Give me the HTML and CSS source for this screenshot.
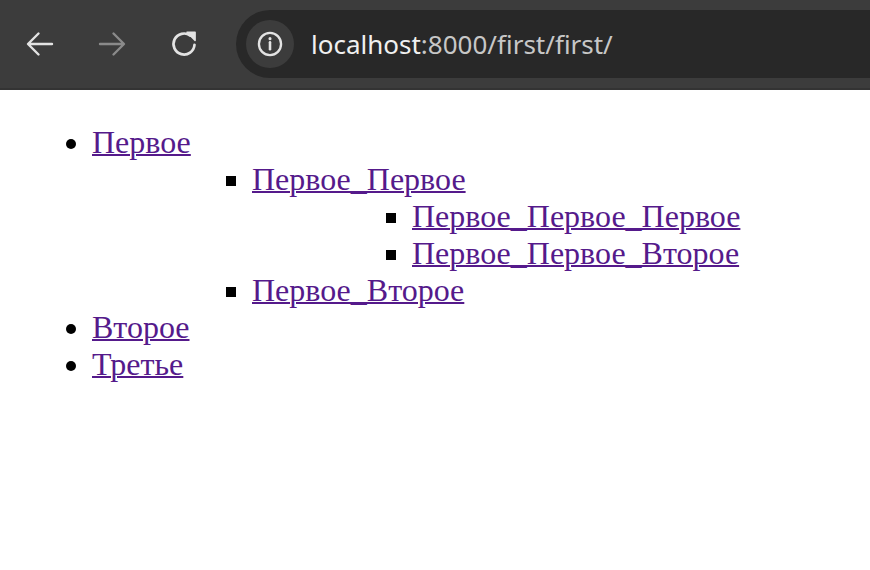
FILE: index.html
```html
<!DOCTYPE html>
<html lang="ru">
<head>
<meta charset="utf-8">
<title>first</title>
<link rel="stylesheet" href="styles.css">
</head>
<body>
<header class="toolbar">
  <span class="nav-btn">
    <svg width="36" height="36" viewBox="0 0 24 24"><path d="M20 12H4.5M11 5l-7 7 7 7" fill="none" stroke="#e3e3e3" stroke-width="1.6" stroke-linecap="round" stroke-linejoin="round"/></svg>
  </span>
  <span class="nav-btn">
    <svg width="36" height="36" viewBox="0 0 24 24"><path d="M4 12h15.5M13 5l7 7-7 7" fill="none" stroke="#8a8a8a" stroke-width="1.6" stroke-linecap="round" stroke-linejoin="round"/></svg>
  </span>
  <span class="nav-btn">
    <svg width="36" height="36" viewBox="0 0 24 24"><path d="M19 12.5A7 7 0 1 1 16.2 6.4" fill="none" stroke="#e3e3e3" stroke-width="1.8" stroke-linecap="round"/><path d="M14 4.2H19.4V9.6Z" fill="#e3e3e3" stroke="#e3e3e3" stroke-width="1" stroke-linejoin="round"/></svg>
  </span>
  <div class="omnibox">
    <span class="info">
      <svg width="28" height="28" viewBox="0 0 24 24"><circle cx="12" cy="12" r="9.5" fill="none" stroke="#e3e3e3" stroke-width="2"/><path d="M12 10.5v6" stroke="#e3e3e3" stroke-width="2.2" stroke-linecap="round"/><circle cx="12" cy="7.4" r="1.3" fill="#e3e3e3"/></svg>
    </span>
    <span class="url"><span class="host">localhost</span>:8000/first/first/</span>
  </div>
</header>
<main class="page">
  <ul class="list">
    <li><a href="#">Первое</a>
      <ul><ul>
        <li><a href="#">Первое_Первое</a>
          <ul><ul>
            <li><a href="#">Первое_Первое_Первое</a></li>
            <li><a href="#">Первое_Первое_Второе</a></li>
          </ul></ul>
        </li>
        <li><a href="#">Первое_Второе</a></li>
      </ul></ul>
    </li>
    <li><a href="#">Второе</a></li>
    <li><a href="#">Третье</a></li>
  </ul>
</main>
</body>
</html>
```

FILE: styles.css
```css
html, body {
  margin: 0;
  padding: 0;
  background: #ffffff;
}
.toolbar {
  height: 88px;
  background: #3c3c3c;
  border-bottom: 2px solid #333333;
  display: flex;
  align-items: center;
  padding-left: 12px;
  box-sizing: content-box;
}
.nav-btn {
  width: 56px;
  height: 56px;
  margin-right: 16px;
  display: flex;
  align-items: center;
  justify-content: center;
}
.nav-btn svg { display: block; }
.omnibox {
  flex: 1;
  height: 68px;
  margin-left: 8px;
  background: #282828;
  border-radius: 34px 0 0 34px;
  display: flex;
  align-items: center;
  padding-left: 10px;
}
.info {
  width: 48px;
  height: 48px;
  border-radius: 50%;
  background: #3c3c3c;
  display: flex;
  align-items: center;
  justify-content: center;
}
.info svg { display: block; }
.url {
  margin-left: 17px;
  font-family: "Noto Sans", "Open Sans", sans-serif;
  font-size: 26px;
  color: #c7c7c7;
  letter-spacing: 0;
}
.host { color: #f0f0f0; }
.page {
  font-family: "Liberation Serif", "Times New Roman", serif;
  font-size: 32px;
  color: #000;
}
.list {
  margin: 34px 0;
  padding-left: 92px;
}
.list ul {
  margin: 0;
  padding-left: 80px;
}
.list a {
  color: #551a8b;
  text-decoration-thickness: 2px;
}
```
